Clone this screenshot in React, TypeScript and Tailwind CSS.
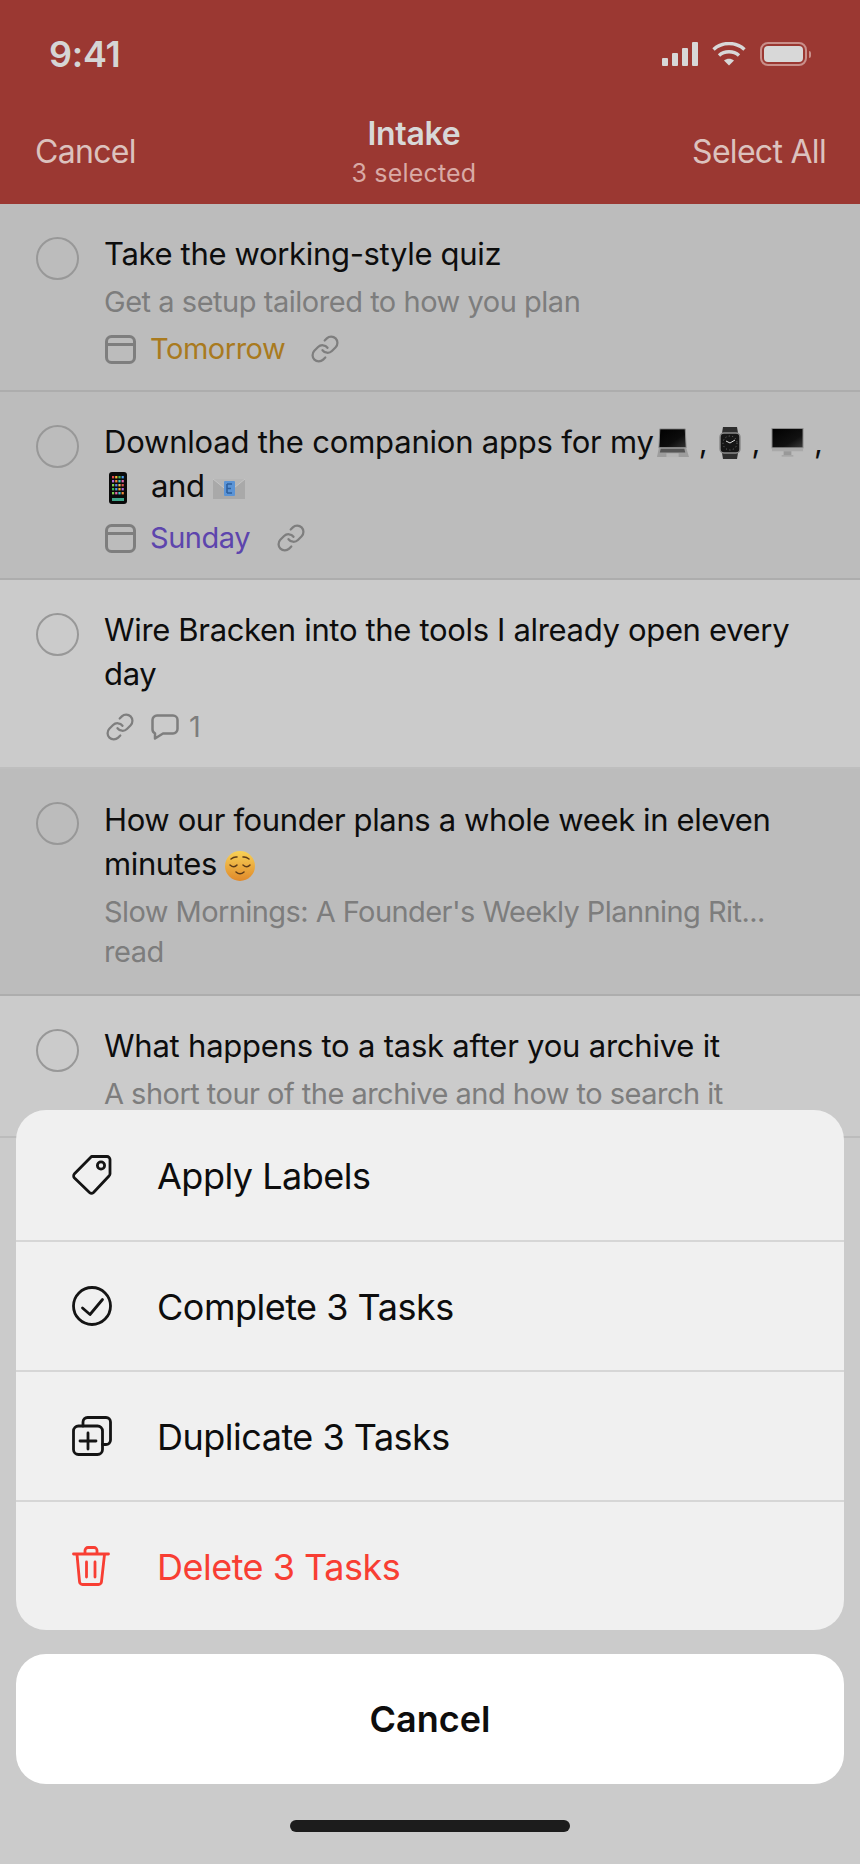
import React from "react";
import { Link } from "lucide-react";

function Laptop() {
  return (
    <svg width="32" height="32" viewBox="0 0 34 32" className="inline-block align-[-6px]">
      <defs>
        <linearGradient id="lapS" x1="0" y1="0" x2="1" y2="1"><stop offset="0" stopColor="#000" /><stop offset="0.6" stopColor="#0c0c0c" /><stop offset="1" stopColor="#333" /></linearGradient>
      </defs>
      <path d="M3 1h27l1 20H2z" fill="url(#lapS)" stroke="#8f8f8f" />
      <path d="M2 21h29l3 10H0z" fill="#9d9d9d" />
      <path d="M4 22h25l1 4H3z" fill="#555" />
      <path d="M10 27h13v4H10z" fill="#b5b5b5" />
    </svg>
  );
}
function Watch() {
  return (
    <svg width="22" height="32" viewBox="0 0 22 32" className="inline-block align-[-6px]">
      <path d="M4 0h14l1 6H3zM3 26h16l-1 6H4z" fill="#2e2e2e" />
      <rect x="1" y="6" width="20" height="20" rx="4" fill="#151515" stroke="#8a8a8a" strokeWidth="1.5" />
      <path d="M11 16l-4-2M11 16l5-3" stroke="#ddd" strokeWidth="1" />
      <circle cx="11" cy="16" r="7" fill="none" stroke="#777" strokeWidth="1" strokeDasharray="1 2.5" />
    </svg>
  );
}
function Desktop() {
  return (
    <svg width="33" height="30" viewBox="0 0 34 30" className="inline-block align-[-5px]">
      <defs>
        <linearGradient id="deskS" x1="0" y1="0" x2="1" y2="1"><stop offset="0" stopColor="#000" /><stop offset="0.65" stopColor="#111" /><stop offset="1" stopColor="#3c3c3c" /></linearGradient>
      </defs>
      <rect x="1" y="0" width="32" height="20" fill="url(#deskS)" stroke="#8f8f8f" />
      <rect x="1" y="20" width="32" height="3.5" fill="#a9a9a9" />
      <rect x="13" y="23.5" width="8" height="4" fill="#999" />
      <rect x="11" y="27.5" width="12" height="1.5" fill="#a5a5a5" />
    </svg>
  );
}
function Phone() {
  const colors = ["#e5484d", "#f5b82e", "#3fb950", "#4a9ae8", "#b06cd9", "#f08a3c", "#41c7c7", "#e56bb0", "#7ccf4f", "#5a7fe8", "#eac54f", "#d9534f", "#3fb950", "#4a9ae8", "#f5b82e", "#b06cd9", "#7ccf4f", "#e56bb0", "#41c7c7", "#f08a3c"];
  return (
    <svg width="18" height="32" viewBox="0 0 18 32" className="inline-block align-[-7px]">
      <rect x="0" y="0" width="18" height="32" rx="3" fill="#0a0a0a" />
      {colors.map((c, i) => (
        <rect key={i} x={3 + (i % 4) * 3.2} y={4 + Math.floor(i / 4) * 4} width="2.2" height="2.4" fill={c} />
      ))}
      <rect x="3" y="26" width="12" height="3" fill="#3fa58a" />
    </svg>
  );
}
function Mail() {
  return (
    <svg width="32" height="22" viewBox="0 0 32 22" className="inline-block align-[-3px]">
      <rect x="0" y="1" width="32" height="20" fill="#a9a9a9" />
      <path d="M0 1l16 13L32 1" fill="#b6b6b6" stroke="#c5c5c5" strokeWidth="1" />
      <rect x="11" y="3" width="11" height="15" rx="1" fill="#5b94d6" />
      <path d="M14 6h5M14 10.500h4M14 15h5M14 6v9" stroke="#2d5f9e" strokeWidth="1.600" fill="none" />
    </svg>
  );
}
function Face() {
  return (
    <svg width="30" height="30" viewBox="0 0 30 30" className="inline-block align-[-6px]">
      <defs>
        <linearGradient id="faceG" x1="0" y1="0" x2="0" y2="1"><stop offset="0" stopColor="#f7d157" /><stop offset="1" stopColor="#e0892a" /></linearGradient>
      </defs>
      <circle cx="15" cy="15" r="15" fill="url(#faceG)" />
      <path d="M5 14q4 3.500 7 0M18 14q4 3.500 7 0M6 8q3-2.500 6-2M18 6q3-.5 6 2M11 21q4 3.500 8 0" stroke="#5b3a17" strokeWidth="1.500" fill="none" strokeLinecap="round" />
    </svg>
  );
}
function CalendarIcon() {
  return (
    <svg width="31" height="29" viewBox="0 0 31 29" fill="none" stroke="#7e7e7e" strokeWidth="3" className="shrink-0">
      <rect x="1.5" y="1.500" width="28" height="26" rx="5" />
      <path d="M1.500 9.500h28" />
    </svg>
  );
}
function CommentIcon() {
  return (
    <svg width="28" height="26" viewBox="0 0 28 26" fill="none" stroke="#7e7e7e" strokeWidth="2.500" strokeLinejoin="round" className="shrink-0">
      <path d="M6 1.500h16a4.500 4.500 0 0 1 4.500 4.500v9a4.500 4.500 0 0 1-4.500 4.500H12L4 24.500v-5.200A4.500 4.500 0 0 1 1.500 15V6A4.500 4.500 0 0 1 6 1.500z" />
    </svg>
  );
}
function LinkIcon() {
  return <Link size={30} strokeWidth={1.8} color="#7e7e7e" className="shrink-0" />;
}
function Signal() {
  return (
    <div className="flex items-end gap-1 h-6">
      <div className="w-1.5 h-2 rounded-[1px] bg-[#d8d8d8]" />
      <div className="w-1.5 h-[13px] rounded-[1px] bg-[#d8d8d8]" />
      <div className="w-1.5 h-[18px] rounded-[1px] bg-[#d8d8d8]" />
      <div className="w-1.5 h-6 rounded-[1px] bg-[#d8d8d8]" />
    </div>
  );
}
function Wifi() {
  return (
    <svg width="34" height="24" viewBox="0 0 34 24" fill="none" stroke="#d8d8d8" strokeWidth="3.400">
      <path d="M1.500 7.500C10 -.5 24 -.5 32.500 7.500" />
      <path d="M7 13.500c5.500-5 14.500-5 20 0" />
      <path d="M17 23.500l-5-5c3-2.300 7-2.300 10 0z" fill="#d8d8d8" stroke="none" />
    </svg>
  );
}
function Battery() {
  return (
    <div className="flex items-center gap-[2px]">
      <div className="w-[47px] h-6 rounded-[8px] border-2 border-[#c98f8a] p-[2px]">
        <div className="w-full h-full rounded-[4px] bg-[#d8d8d8]" />
      </div>
      <div className="w-[2px] h-[7px] rounded-r-sm bg-[#c98f8a]" />
    </div>
  );
}

function Row({ selected, border, children }: { selected: boolean; border: string; children: React.ReactNode }) {
  return (
    <div className={`flex gap-[25px] pl-9 pr-[30px] pt-[28px] border-b-2 ${border} ${selected ? "bg-[#bcbcbc]" : "bg-[#cbcbcb]"}`}>
      <div className="w-[43px] h-[43px] mt-[5px] rounded-full border-2 border-[#989898] shrink-0" />
      <div className="flex-1 min-w-0">{children}</div>
    </div>
  );
}
const titleCls = "text-[31px] leading-[44px] tracking-[-0.33px] text-[#0d0d0d]";
const subCls = "text-[29px] leading-[40px] tracking-[-0.47px] text-[#7d7d7d]";
const metaCls = "flex items-center h-10 pl-px text-[29px] tracking-[-0.47px]";

function Action({ icon, label, red, first }: { icon: React.ReactNode; label: string; red?: boolean; first?: boolean }) {
  return (
    <div className={`flex items-center h-[130px] pl-14 gap-[45px] ${first ? "" : "border-t-2 border-[#d6d6d6]"}`}>
      {icon}
      <span className={`pt-0.5 text-[36px] tracking-[-0.5px] ${red ? "text-[#f83e33]" : "text-[#0d0d0d]"}`}>{label}</span>
    </div>
  );
}

export default function App() {
  return (
    <div className="relative w-[860px] h-[1864px] overflow-hidden bg-[#cbcbcb] font-['Inter',sans-serif]">
      <header className="h-[204px] bg-[#9b3832] pl-[35px] pr-[34px] text-[#dcc2be]">
        <div className="flex items-center justify-between h-[108px] pl-[14px] pr-[15px]">
          <span className="text-[36px] font-semibold tracking-[-0.3px] leading-none text-[#d5d5d5]">9:41</span>
          <div className="flex items-center gap-3.5">
            <Signal />
            <Wifi />
            <Battery />
          </div>
        </div>
        <div className="flex justify-between items-start">
          <span className="text-[32px] leading-[40px] tracking-[-0.7px] mt-[24px]">Cancel</span>
          <div className="flex flex-col items-center">
            <span className="text-[32px] font-semibold leading-[40px] tracking-[-0.3px] mt-[6px] text-[#d8d8d8]">Intake</span>
            <span className="text-[25px] leading-[36px] tracking-[0.2px] mt-[1px] text-[#d9aaa5]">3 selected</span>
          </div>
          <span className="text-[32px] leading-[40px] tracking-[-0.7px] mt-[24px]">Select All</span>
        </div>
      </header>

      <Row selected border="border-[#adadad]">
        <div className={titleCls}>Take the working-style quiz</div>
        <div className={`${subCls} mt-1.5`}>Get a setup tailored to how you plan</div>
        <div className={`${metaCls} mt-[7px] pb-[21px] box-content`}>
          <CalendarIcon />
          <span className="ml-[14px] text-[#a97a1e]">Tomorrow</span>
          <span className="ml-[25px]"><LinkIcon /></span>
        </div>
      </Row>
      <Row selected border="border-[#adadad]">
        <div className={`${titleCls} whitespace-nowrap`}>
          <span className="tracking-[-0.2px]">Download the companion apps for my</span>
          <span className="ml-[3px]"><Laptop /></span>
          <span className="ml-[10px]">,</span>
          <span className="ml-[12px]"><Watch /></span>
          <span className="ml-[10px]">,</span>
          <span className="ml-[11px]"><Desktop /></span>
          <span className="ml-[10px]">,</span>
          <br />
          <span className="ml-[5px]"><Phone /></span>
          <span className="ml-[24px]">and</span>
          <span className="ml-2"><Mail /></span>
        </div>
        <div className={`${metaCls} mt-[10px] pb-5 box-content`}>
          <CalendarIcon />
          <span className="ml-[14px] text-[#5d45ad]">Sunday</span>
          <span className="ml-[26px]"><LinkIcon /></span>
        </div>
      </Row>
      <Row selected={false} border="border-[#bebebe]">
        <div className={titleCls}>Wire Bracken into the tools I already open every day</div>
        <div className={`${metaCls} mt-[11px] pb-5 box-content`}>
          <LinkIcon />
          <span className="ml-4"><CommentIcon /></span>
          <span className="ml-2.5 text-[#7d7d7d]">1</span>
        </div>
      </Row>
      <Row selected border="border-[#adadad]">
        <div className="mt-[1px]" />
        <div className={titleCls}>
          <span className="tracking-[-0.38px]">How our founder plans a whole week in eleven minutes</span> <Face />
        </div>
        <div className={`${subCls} mt-1.5 pb-[22px]`}>
          <span className="tracking-[-0.57px]">Slow Mornings: A Founder's Weekly Planning Rit...</span><br />read
        </div>
      </Row>
      <Row selected={false} border="border-[#bcbcbc]">
        <div className={titleCls}>
          <span className="tracking-[-0.22px]">What happens to a task after you archive it</span>
        </div>
        <div className={`${subCls} mt-1.5 pb-[22px] whitespace-nowrap`}>
          <span className="tracking-[-0.52px]">A short tour of the archive and how to search it</span>
        </div>
      </Row>

      <div className="absolute inset-x-0 bottom-0 px-4 pb-8 flex flex-col">
        <div className="rounded-[30px] bg-[#f0f0f0] overflow-hidden">
          <Action
            first
            label="Apply Labels"
            icon={
              <svg width="40" height="40" viewBox="0 0 40 40" fill="none" stroke="#141414" strokeWidth="2.800" strokeLinejoin="round" className="shrink-0">
                <path d="M19.500 1.500H35a3 3 0 0 1 3 3V19a3 3 0 0 1-1 2L21.500 37.500a3 3 0 0 1-4 0L2.500 23a3 3 0 0 1 0-4.200z" />
                <circle cx="29" cy="10.500" r="3.600" />
              </svg>
            }
          />
          <Action
            label="Complete 3 Tasks"
            icon={
              <svg width="40" height="40" viewBox="0 0 40 40" fill="none" stroke="#141414" strokeWidth="2.800" strokeLinecap="round" strokeLinejoin="round" className="shrink-0">
                <circle cx="20" cy="20" r="18.500" />
                <path d="M10.500 22l7.500 6.500L30.500 13.500" />
              </svg>
            }
          />
          <Action
            label="Duplicate 3 Tasks"
            icon={
              <svg width="40" height="40" viewBox="0 0 40 40" fill="none" stroke="#141414" strokeWidth="2.800" strokeLinecap="round" strokeLinejoin="round" className="shrink-0">
                <rect x="1.500" y="10" width="29" height="28.500" rx="5" />
                <path d="M11 10V6a4.500 4.500 0 0 1 4.500-4.500H34A4.500 4.500 0 0 1 38.500 6v18a4.500 4.500 0 0 1-4.500 4.500h-3.500" />
                <path d="M16 17v16M8 25h16" />
              </svg>
            }
          />
          <Action
            red
            label="Delete 3 Tasks"
            icon={
              <svg width="40" height="40" viewBox="0 0 40 40" fill="none" stroke="#f83e33" strokeWidth="2.800" strokeLinecap="round" strokeLinejoin="round" className="shrink-0">
                <path d="M1.500 8h35" />
                <path d="M13 7.500V4.500a3 3 0 0 1 3-3h6a3 3 0 0 1 3 3v3" />
                <path d="M5 8.500L7.500 35.500a3 3 0 0 0 3 3h16a3 3 0 0 0 3-3L32.500 8.500" />
                <path d="M14.500 16v15M23 16v15" />
              </svg>
            }
          />
        </div>
        <div className="mt-6 h-[130px] rounded-[30px] bg-white flex items-center justify-center text-[36px] font-semibold tracking-[0px] text-[#0d0d0d]">
          Cancel
        </div>
        <div className="mt-9 mx-auto w-[280px] h-3 rounded-full bg-[#1c1c1c]" />
      </div>
    </div>
  );
}
